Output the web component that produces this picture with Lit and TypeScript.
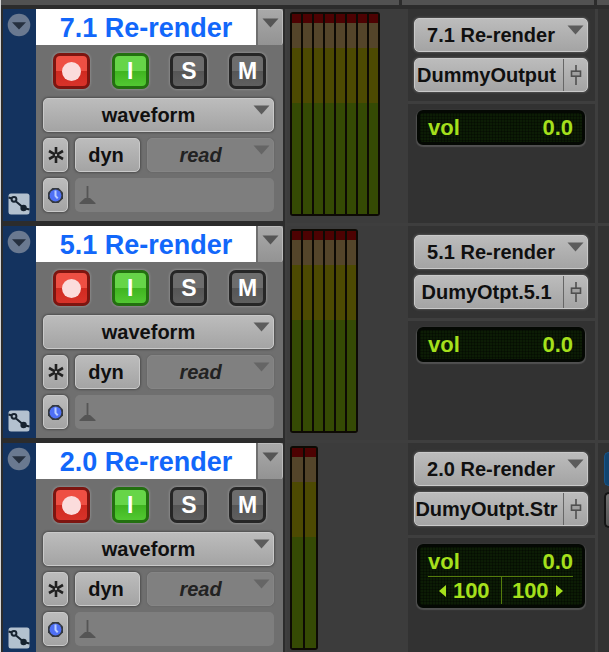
import { LitElement, html, css, svg, nothing } from "lit";
import { customElement, property } from "lit/decorators.js";

interface Track {
  name: string;
  output: string;
  channels: number;
  wide: boolean;
  pan: boolean;
}

const TRACKS: Track[] = [
  { name: "7.1 Re-render", output: "DummyOutput", channels: 8, wide: false, pan: false },
  { name: "5.1 Re-render", output: "DumyOtpt.5.1", channels: 6, wide: false, pan: false },
  { name: "2.0 Re-render", output: "DumyOutpt.Str", channels: 2, wide: true, pan: true },
];

const base = css`
  * {
    box-sizing: border-box;
  }
  button,
  select,
  input {
    margin: 0;
    padding: 0;
    border: 0;
    border-radius: 0;
    font: inherit;
    color: inherit;
    background: none;
    appearance: none;
    outline: none;
  }
  svg {
    display: block;
  }
  .face {
    height: 34px;
    border: 1px solid #c9c9c9;
    border-radius: 5px;
    background: linear-gradient(#bcbcbc, #a4a4a4);
    box-shadow: 0 0 2px 1px #4f4f4f;
    color: #101010;
    display: flex;
    align-items: center;
    justify-content: center;
  }
`;

@customElement("drop-down")
class DropDown extends LitElement {
  @property() label = "";
  @property() value = "";
  @property({ type: Boolean, reflect: true }) dim = false;

  static styles = [
    base,
    css`
      :host {
        display: grid;
        min-width: 0;
      }
      .face,
      .arrow {
        grid-area: 1 / 1;
      }
      .face {
        width: 100%;
        padding: 0 20px 0 0;
        text-align: center;
        text-align-last: center;
      }
      .arrow {
        justify-self: end;
        margin: 7px 4px 0 0;
        fill: #5c5c5c;
        pointer-events: none;
      }
      :host([dim]) .face {
        background: #808080;
        border-color: #858585;
        box-shadow: 0 0 1px 1px #6a6a6a;
        color: #222;
        font-style: italic;
      }
      :host([dim]) .arrow {
        fill: #656565;
      }
    `,
  ];

  render() {
    return html`
      <select class="face" aria-label=${this.label}>
        <option>${this.value}</option>
      </select>
      <svg class="arrow" width="17" height="10" viewBox="0 0 17 10">
        <path d="M0.5 0.5h16L8.5 9.5z" />
      </svg>
    `;
  }
}

@customElement("level-meter")
class LevelMeter extends LitElement {
  @property({ type: Number }) channels = 2;
  @property({ type: Boolean, reflect: true }) wide = false;

  static styles = css`
    :host {
      display: flex;
      gap: 2px;
      padding: 2px;
      background: #0d0a04;
      border-radius: 3px;
      height: 204px;
    }
    .bar {
      width: 9px;
      background: linear-gradient(
        #4d0202 0 9px,
        #54452a 9px 34px,
        #4d4a02 34px 89px,
        #354a04 89px
      );
    }
    :host([wide]) .bar {
      width: 11px;
    }
  `;

  render() {
    return Array.from({ length: this.channels }, () => html`<div class="bar"></div>`);
  }
}

@customElement("track-strip")
class TrackStrip extends LitElement {
  @property({ attribute: false }) track!: Track;

  static styles = [
    base,
    css`
      :host {
        display: grid;
        grid-template-columns: 33px 247px 4px 121px minmax(0, 1fr) 11px;
        height: 217px;
      }
      .rail {
        height: 212px;
        background: #14335f;
        display: flex;
        flex-direction: column;
        align-items: center;
        justify-content: space-between;
        padding: 4px 1px 6px 0;
      }
      .controls {
        height: 212px;
        background: #6f6f6f;
        display: flex;
        flex-direction: column;
      }
      .title {
        display: flex;
        gap: 2px;
        height: 36px;
      }
      .name {
        flex: 1;
        min-width: 0;
        background: #fff;
        color: #1267fa;
        font-size: 27px;
        text-align: center;
        padding-top: 2px;
      }
      .more {
        width: 25px;
        background: linear-gradient(#a9a9a9, #939393);
        border-top: 1px solid #bbb;
        border-right: 1px solid #bbb;
        border-radius: 0 3px 3px 0;
        display: flex;
        justify-content: center;
        padding-top: 8px;
        fill: #555;
      }
      .modes {
        display: flex;
        justify-content: space-between;
        padding: 8px 17px 9px;
      }
      .mode {
        width: 37px;
        height: 36px;
        border: 3px solid #262626;
        border-radius: 7px;
        background: linear-gradient(#6d6d6d 0 50%, #565656 50%, #5f5f5f);
        box-shadow: 0 0 2px 1px #8a8a8a;
        color: #fff;
        font-size: 23px;
        line-height: 30px;
        display: flex;
        align-items: center;
        justify-content: center;
      }
      .rec {
        border-color: #7d1510;
        background: linear-gradient(#ee4f43 0 50%, #d02a20 50%, #d8332a);
      }
      .input {
        border-color: #237010;
        background: linear-gradient(#66d548 0 50%, #3fb41f 50%, #52c832);
      }
      .dot {
        width: 19px;
        height: 19px;
        border-radius: 50%;
        background: #fbdcdc;
      }
      .rows {
        display: flex;
        flex-direction: column;
        gap: 6px;
        padding: 0 9px 0 7px;
      }
      .row {
        display: flex;
        gap: 7px;
      }
      .grow {
        flex: 1;
      }
      .small {
        width: 25px;
      }
      .dyn {
        width: 65px;
        padding-right: 3px;
      }
      .well {
        flex: 1;
        height: 34px;
        border-radius: 5px;
        background: #7e7e7e;
        display: flex;
        align-items: center;
        padding-left: 4px;
        fill: #555;
        stroke: #555;
      }
      .meter {
        grid-column: 4;
        padding: 3px;
        height: 214px;
        display: flex;
        align-items: flex-start;
        background: #3c3c3c;
      }
      .io {
        grid-column: 5;
        margin-right: 3px;
        height: 214px;
        display: flex;
        flex-direction: column;
        gap: 3px;
      }
      .routing {
        background: #333;
        padding: 9px 7px 3px 6px;
        height: 92px;
        display: flex;
        flex-direction: column;
        gap: 6px;
      }
      .output {
        display: flex;
        padding: 0;
        justify-content: flex-start;
      }
      .path {
        flex: 1;
        min-width: 0;
        padding-right: 5px;
        text-align: center;
        white-space: nowrap;
      }
      .fader {
        width: 24px;
        height: 32px;
        border-left: 1px solid #666;
        display: flex;
        align-items: center;
        justify-content: center;
      }
      .level {
        flex: 1;
        background: #323232;
        padding: 6px 10px 0 9px;
      }
      .lcd {
        background-color: #0c1c05;
        background-image: repeating-linear-gradient(90deg, #00000055 0 1px, transparent 1px 3px),
          repeating-linear-gradient(#00000055 0 1px, transparent 1px 3px);
        border: 3px solid #040803;
        border-radius: 6px;
        box-shadow: 0 1px 1px 1px #505050;
        padding: 0 9px 0 8px;
        color: #a5e01c;
        font-size: 22px;
      }
      .line {
        display: flex;
        justify-content: space-between;
        line-height: 29px;
        height: 29px;
      }
      .pans {
        display: grid;
        grid-template-columns: 1fr 1fr;
        height: 29px;
        border-top: 1px solid #557c0c;
      }
      .pan {
        display: flex;
        align-items: center;
        justify-content: center;
        gap: 7px;
        height: 27px;
        fill: #a5e01c;
      }
      .pan + .pan {
        border-left: 1px solid #557c0c;
      }
      .next {
        height: 214px;
        background: #323232;
        display: flex;
        flex-direction: column;
        gap: 6px;
        padding: 9px 0 0 6px;
        overflow: hidden;
      }
      .send {
        height: 34px;
        border: 1px solid #19558a;
        border-right: 0;
        border-radius: 6px 0 0 6px;
        background: #11446f;
      }
      .slot {
        height: 36px;
        border: 2px solid #151515;
        border-right: 0;
        border-radius: 7px 0 0 7px;
        background: linear-gradient(#707070, #555);
      }
    `,
  ];

  render() {
    const t = this.track;
    return html`
      <div class="rail">
        <button aria-label="Track options">
          <svg width="24" height="24" viewBox="0 0 24 24">
            <circle cx="12" cy="12" r="11.3" fill="#6a7990" />
            <path d="M5 9.2h14L12 16.4z" fill="#26303f" />
          </svg>
        </button>
        <button aria-label="Show automation">
          <svg width="22" height="22" viewBox="0 0 22 22">
            <rect x="0.5" y="0.5" width="21" height="21" rx="2.5" fill="#b3c1cf" />
            <g fill="none" stroke="#172330" stroke-width="2">
              <path d="M0.5 4.5l3.5 1M8 8.5l6 5M17.5 15.5l4 1" />
              <circle cx="6" cy="6.3" r="2.4" />
              <circle cx="15.6" cy="15" r="2.2" fill="#172330" />
            </g>
          </svg>
        </button>
      </div>

      <div class="controls">
        <div class="title">
          <input class="name" aria-label="Track name" .value=${t.name} />
          <button class="more" aria-label="Track menu">
            <svg width="17" height="10" viewBox="0 0 17 10"><path d="M0.5 0.5h16L8.5 9.5z" /></svg>
          </button>
        </div>
        <div class="modes">
          <button class="mode rec" aria-label="Record enable"><span class="dot"></span></button>
          <button class="mode input">I</button>
          <button class="mode">S</button>
          <button class="mode">M</button>
        </div>
        <div class="rows">
          <drop-down label="Track view" value="waveform"></drop-down>
          <div class="row">
            <button class="face small" aria-label="Freeze">
              <svg width="18" height="18" viewBox="0 0 18 18" fill="none" stroke="#202020" stroke-width="2.6">
                <path d="M9 7.2V1M9 10.8V17M7.4 8.1L2 5M10.6 8.1L16 5M7.4 9.9L2 13M10.6 9.9L16 13" />
                <circle cx="9" cy="9" r="1.9" stroke-width="1.4" />
              </svg>
            </button>
            <button class="face dyn">dyn</button>
            <drop-down class="grow" label="Automation mode" value="read" dim></drop-down>
          </div>
          <div class="row">
            <button class="face small" aria-label="Timebase">
              <svg width="17" height="17" viewBox="0 0 17 17">
                <path d="M5.4 1h6.2L16 5.4v6.2L11.6 16H5.4L1 11.6V5.4z" fill="#33383f" />
                <circle cx="8.5" cy="8.5" r="5.9" fill="#4f70f5" />
                <path d="M8.5 3.5v5.3l2.2 2.6" fill="none" stroke="#b9cdff" stroke-width="2" />
              </svg>
            </button>
            <div class="well">
              <svg width="17" height="20" viewBox="0 0 17 20">
                <path d="M8.5 1v13" stroke-width="1.8" />
                <path d="M0.5 19v-1l5.5-5h5l5.5 5v1z" stroke="none" />
              </svg>
            </div>
          </div>
        </div>
      </div>

      <div class="meter">
        <level-meter .channels=${t.channels} ?wide=${t.wide}></level-meter>
      </div>

      <div class="io">
        <div class="routing">
          <drop-down label="Input path" .value=${t.name}></drop-down>
          <div class="face output">
            <button class="path">${t.output}</button>
            <button class="fader" aria-label="Output window">
              <svg width="12" height="22" viewBox="0 0 12 22" fill="none" stroke="#505050" stroke-width="1.6">
                <path d="M6 1v6M6 13v8" />
                <rect x="1.5" y="7.2" width="9" height="5" fill="#a0a0a0" />
              </svg>
            </button>
          </div>
        </div>
        <div class="level">
          <div class="lcd">
            <div class="line"><span>vol</span><span>0.0</span></div>
            ${t.pan
              ? html`<div class="pans">
                  <span class="pan">
                    <svg width="7" height="12" viewBox="0 0 7 12">${svg`<path d="M7 0v12L0 6z" />`}</svg>100
                  </span>
                  <span class="pan">
                    100<svg width="7" height="12" viewBox="0 0 7 12">${svg`<path d="M0 0v12l7-6z" />`}</svg>
                  </span>
                </div>`
              : nothing}
          </div>
        </div>
      </div>

      <div class="next">
        ${t.pan ? html`<div class="send"></div><div class="slot"></div>` : nothing}
      </div>
    `;
  }
}

@customElement("app-root")
class AppRoot extends LitElement {
  static styles = css`
    :host {
      display: block;
      height: 100vh;
      overflow: hidden;
      background: #2c2c2c;
      font: bold 20px "Liberation Sans", Arial, sans-serif;
      border-left: 1px solid #d8d8d8;
    }
    .bar {
      display: grid;
      grid-template-columns: minmax(0, 1fr) 192px 12px;
      gap: 3px;
      height: 5px;
      margin-bottom: 4px;
    }
    .cell {
      background: #525252;
    }
    .tracks {
      padding-left: 2px;
      background: linear-gradient(90deg, #2c2c2c 284px, #3e3e3e 284px);
    }
  `;

  render() {
    return html`
      <div class="bar">
        <div class="cell"></div>
        <div class="cell"></div>
        <div class="cell"></div>
      </div>
      <div class="tracks">
        ${TRACKS.map((t) => html`<track-strip .track=${t}></track-strip>`)}
      </div>
    `;
  }
}
